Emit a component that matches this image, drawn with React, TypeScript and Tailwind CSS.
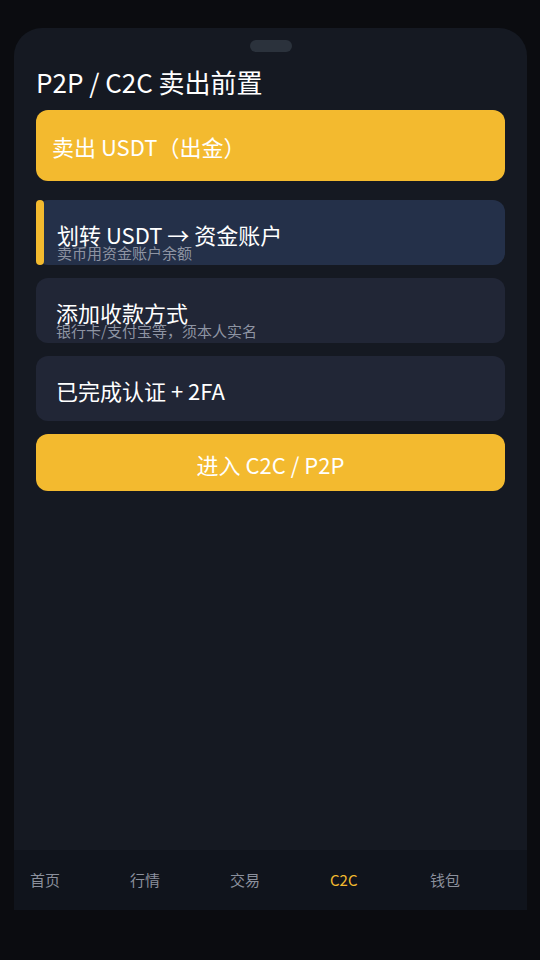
import React from "react";

const font = { fontFamily: '"Noto Sans CJK SC", "Noto Sans", sans-serif' };

export default function App() {
  return (
    <div className="w-[540px] h-[960px] bg-[#0b0c10] overflow-hidden" style={font}>
      <div className="ml-[14px] mt-[28px] w-[513px] h-[882px] bg-[#151922] rounded-t-[28px] flex flex-col">
        <div className="pt-[12px] flex justify-center">
          <div className="w-[42px] h-[12px] rounded-full bg-[#2b323c]" />
        </div>

        <div className="flex-1 px-[22px]">
          <h1 className="mt-[13px] text-[26px] leading-[34px] text-white font-normal">
            P2P / C2C 卖出前置
          </h1>

          <div className="mt-[11px] h-[71px] rounded-xl bg-[#f3ba2f] flex items-center pl-[16px] pt-[1px]">
            <span className="text-[22px] leading-[28px] text-white">卖出 USDT（出金）</span>
          </div>

          <div className="mt-[19px] h-[65px] rounded-xl bg-[#243049] flex">
            <div className="w-[8px] h-full rounded-[4px] bg-[#f3ba2f] shrink-0" />
            <div className="pl-[13px] pt-[23px]">
              <div className="text-[22px] leading-[22px] text-white">划转 USDT → 资金账户</div>
              <div className="text-[15px] leading-[15px] text-[#8e94a3]">卖币用资金账户余额</div>
            </div>
          </div>

          <Step title="添加收款方式" sub="银行卡/支付宝等，须本人实名" />

          <div className="mt-[13px] h-[65px] rounded-xl bg-[#212636] flex items-center pl-[20px] pt-[3px]">
            <span className="text-[22px] leading-[28px] text-white">已完成认证 + 2FA</span>
          </div>

          <button className="mt-[13px] w-full h-[57px] rounded-xl bg-[#f3ba2f] flex items-center justify-center pt-[3px]">
            <span className="text-[22px] leading-[28px] text-white">进入 C2C / P2P</span>
          </button>
        </div>

        <nav className="h-[60px] bg-[#10141c] flex items-center pl-[16px]">
          {["首页", "行情", "交易", "C2C", "钱包"].map((t) => (
            <span
              key={t}
              className={
                "w-[100px] shrink-0 text-[15px] leading-[20px] " +
                (t === "C2C" ? "text-[#f3ba2f]" : "text-[#8b909c]")
              }
            >
              {t}
            </span>
          ))}
        </nav>
      </div>
    </div>
  );
}

function Step({ title, sub }: { title: string; sub: string }) {
  return (
    <div className="mt-[13px] h-[65px] rounded-xl bg-[#212636] pl-[20px] pt-[23px] overflow-hidden">
      <div className="text-[22px] leading-[22px] text-white">{title}</div>
      <div className="text-[15px] leading-[15px] text-[#8e94a3]">{sub}</div>
    </div>
  );
}
